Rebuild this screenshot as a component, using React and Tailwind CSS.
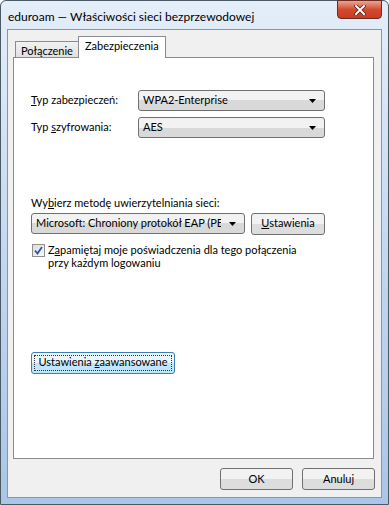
import React from 'react';

const font = { fontFamily: 'Lato, Roboto, sans-serif' };

function Arrow() {
  return (
    <svg width="7" height="4" viewBox="0 0 7 4" className="shrink-0">
      <path d="M0 0 H7 L3.5 4 Z" fill="#000" />
    </svg>
  );
}

function Combo({ value, className = '' }) {
  return (
    <div
      className={`flex items-center h-[21px] pl-[4px] pr-[8px] gap-[8px] rounded-[3px] border border-[#707070] bg-gradient-to-b from-[#f2f2f2] from-50% to-[#d9d9d9] to-50% text-[11px] text-black ${className}`}
    >
      <span className="flex-1 min-w-0 whitespace-nowrap overflow-hidden">{value}</span>
      <Arrow />
    </div>
  );
}

function Button({ children, className = '', focused = false }) {
  if (focused) {
    return (
      <div
        className={`flex items-center justify-center h-[22px] rounded-[3px] border border-[#3c7fb1] bg-gradient-to-b from-[#eaf6fd] from-50% to-[#bee6fd] to-50% p-[2px] text-[11px] text-black whitespace-nowrap ${className}`}
      >
        <div className="w-full h-full flex items-center justify-center border border-dotted border-[#333]">{children}</div>
      </div>
    );
  }
  return (
    <div
      className={`flex items-center justify-center h-[22px] rounded-[3px] border border-[#707070] bg-gradient-to-b from-[#f2f2f2] from-50% to-[#dddddd] to-50% text-[11px] text-black whitespace-nowrap ${className}`}
    >
      {children}
    </div>
  );
}

export default function App() {
  return (
    <div className="w-[389px] h-[505px] bg-white overflow-hidden" style={font}>
      <div className="w-[389px] h-[505px] rounded-t-[6px] border border-[#4b5866] bg-gradient-to-b from-[#e4eef9] via-[#c3d8f0] to-[#a9c6e8] flex flex-col">
        {/* title bar */}
        <div className="flex items-start justify-between h-[28px] pl-[7px] pr-[6px]">
          <div className="pt-[7px] text-[12px] text-black whitespace-nowrap">
            eduroam — Właściwości sieci bezprzewodowej
          </div>
          <div className="w-[45px] h-[19px] mt-[-1px] rounded-b-[4px] border border-[#6b2a22] bg-gradient-to-b from-[#e8a493] via-[#d24a2f] to-[#c93c22] flex items-center justify-center">
            <svg width="12" height="10" viewBox="0 0 12 10">
              <path d="M2 1 L10 9 M10 1 L2 9" stroke="#4a1a14" strokeWidth="3.4" strokeLinecap="square" />
              <path d="M2 1 L10 9 M10 1 L2 9" stroke="#fff" strokeWidth="2" strokeLinecap="square" />
            </svg>
          </div>
        </div>

        {/* client area */}
        <div className="mx-[6px] mb-[6px] flex-1 border border-[#8697a8] bg-[#f0f0f0] flex flex-col px-[5px] pt-[6px] pb-[7px]">
          {/* tabs */}
          <div className="flex items-end h-[21px] pl-[2px]">
            <div className="h-[16px] px-[5px] border border-b-0 border-[#898c95] bg-gradient-to-b from-[#f2f2f2] to-[#e0e0e0] text-[11px] leading-[17px] text-black">
              Połączenie
            </div>
            <div className="relative h-[21px] ml-[-1px] px-[6px] border border-b-0 border-[#898c95] bg-white text-[11px] leading-[17px] text-black z-10 mb-[-1px] box-content">
              Zabezpieczenia
            </div>
          </div>

          <div className="flex-1 border border-[#898c95] bg-white mr-[2px] pl-[17px] pr-[48px] pt-[32px] text-[11px] text-black">
            <div className="flex items-center h-[21px]">
              <span className="w-[107px] whitespace-nowrap"><u>T</u>yp zabezpieczeń:</span>
              <Combo value="WPA2-Enterprise" className="flex-1" />
            </div>
            <div className="flex items-center h-[21px] mt-[6px]">
              <span className="w-[107px] whitespace-nowrap">Typ <u>s</u>zyfrowania:</span>
              <Combo value="AES" className="flex-1" />
            </div>

            <div className="mt-[57px] whitespace-nowrap">Wy<u>b</u>ierz metodę uwierzytelniania sieci:</div>
            <div className="flex items-center mt-[1px] gap-[6px]">
              <Combo value="Microsoft: Chroniony protokół EAP (PEAP)" className="w-[214px]" />
              <Button className="flex-1"><span><u>U</u>stawienia</span></Button>
            </div>

            <div className="flex items-start mt-[8px] ml-[1px]">
              <div className="w-[13px] h-[13px] mt-[1px] border border-[#8e8f8f] bg-gradient-to-br from-[#dcdcdc] to-[#fbfbfb] flex items-center justify-center shrink-0">
                <svg width="9" height="9" viewBox="0 0 9 9">
                  <path d="M1 4.5 L3.5 7.5 L8 1" fill="none" stroke="#2a55a8" strokeWidth="1.8" />
                </svg>
              </div>
              <div className="ml-[3px] whitespace-nowrap">
                <div className="leading-[13px]">Z<u>a</u>pamiętaj moje poświadczenia dla tego połączenia</div>
                <div className="leading-[13px]">przy każdym logowaniu</div>
              </div>
            </div>

            <Button focused className="mt-[83px] w-[144px]">
              <span>Ustawienia <u>z</u>aawansowane</span>
            </Button>
          </div>

          <div className="flex justify-end gap-[9px] mt-[9px] mr-[1px]">
            <Button className="w-[73px]">OK</Button>
            <Button className="w-[73px]">Anuluj</Button>
          </div>
        </div>
      </div>
    </div>
  );
}
